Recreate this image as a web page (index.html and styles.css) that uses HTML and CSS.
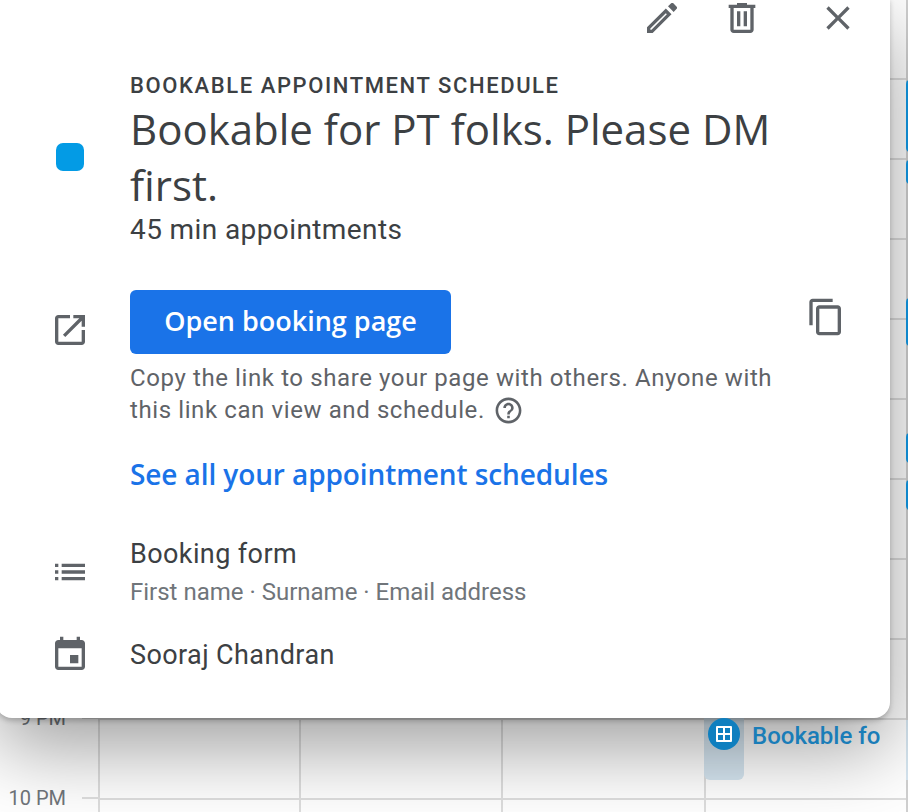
FILE: index.html
```html
<!DOCTYPE html>
<html lang="en">
    <head>
        <title>Bookable appointment schedule</title>
        <meta charset="utf-8" />
        <link rel="stylesheet" href="styles.css">
    </head>
    <body>
        <div class="calendar">
            <div class="hours">
                <div class="hour"><span>1 PM</span><i></i></div>
                <div class="hour"><span>2 PM</span><i></i></div>
                <div class="hour"><span>3 PM</span><i></i></div>
                <div class="hour"><span>4 PM</span><i></i></div>
                <div class="hour"><span>5 PM</span><i></i></div>
                <div class="hour"><span>6 PM</span><i></i></div>
                <div class="hour"><span>7 PM</span><i></i></div>
                <div class="hour"><span>8 PM</span><i></i></div>
                <div class="hour"><span>9 PM</span><i></i></div>
                <div class="hour"><span>10 PM</span><i></i></div>
            </div>
            <div class="day day1"></div>
            <div class="day day2"></div>
            <div class="day day3"></div>
            <div class="day day4">
                <div class="slot"></div>
                <div class="slot_chip">
                    <svg class="slot_icon" viewBox="0 0 32 32"><path fill="#fff" fill-rule="evenodd" d="M9 8h14a1 1 0 0 1 1 1v14a1 1 0 0 1-1 1H9a1 1 0 0 1-1-1V9a1 1 0 0 1 1-1z M10 10v5h5v-5z M17 10v5h5v-5z M10 17v5h5v-5z M17 17v5h5v-5z"/></svg>
                    <span class="slot_text">Bookable for PT folks</span>
                </div>
            </div>
            <div class="day day5">
                <div class="bar bar1"></div>
                <div class="bar bar2"></div>
                <div class="bar bar3"></div>
                <div class="bar bar4"></div>
                <div class="bar bar5"></div>
                <div class="slot_edge"></div>
            </div>
        </div>

        <div class="popup">
            <div class="tools">
                <svg class="icon" viewBox="0 0 24 24"><path fill-rule="evenodd" d="M3 21v-3.4L14.3 6.3l3.4 3.4L6.4 21H3zM5 19h.7l9.2-9.3-.6-.6L5 18.3V19zM15.6 5l1.9-1.8c.4-.3.9-.3 1.3 0l2 2c.3.4.3.9 0 1.3L19 8.4 15.6 5z"/></svg>
                <svg class="icon" viewBox="0 0 24 24"><path d="M15 4V3H9v1H4v2h1v13c0 1.1.9 2 2 2h10c1.1 0 2-.9 2-2V6h1V4h-5zm2 15H7V6h10v13zM9 8h2v9H9zm4 0h2v9h-2z"/></svg>
                <svg class="icon close" viewBox="0 0 24 24"><path d="M19 6.41L17.59 5 12 10.59 6.41 5 5 6.41 10.59 12 5 17.59 6.41 19 12 13.41 17.59 19 19 17.59 13.41 12z"/></svg>
            </div>

            <div class="row head">
                <div class="side"><div class="swatch"></div></div>
                <div class="main">
                    <div class="kicker">BOOKABLE APPOINTMENT SCHEDULE</div>
                    <div class="title">Bookable for PT folks. Please DM first.</div>
                    <div class="sub">45 min appointments</div>
                </div>
            </div>

            <div class="row booking">
                <div class="side side_link">
                    <svg class="icon" viewBox="0 0 24 24"><path d="M19 19H5V5h7V3H5c-1.11 0-2 .9-2 2v14c0 1.1.89 2 2 2h14c1.1 0 2-.9 2-2v-7h-2v7zM14 3v2h3.59l-9.83 9.83 1.41 1.41L19 6.41V10h2V3h-7z"/></svg>
                </div>
                <div class="main">
                    <div class="button_row">
                        <div class="open_btn">Open booking page</div>
                        <svg class="icon copy" viewBox="0 0 24 24"><path d="M16 1H4c-1.1 0-2 .9-2 2v14h2V3h12V1zm3 4H8c-1.1 0-2 .9-2 2v14c0 1.1.9 2 2 2h11c1.1 0 2-.9 2-2V7c0-1.1-.9-2-2-2zm0 16H8V7h11v14z"/></svg>
                    </div>
                    <div class="hint">Copy the link to share your page with others. Anyone with this link can view and schedule.<svg class="help" viewBox="0 0 24 24"><path d="M11 18h2v-2h-2v2zm1-16C6.48 2 2 6.48 2 12s4.48 10 10 10 10-4.48 10-10S17.52 2 12 2zm0 18c-4.41 0-8-3.59-8-8s3.59-8 8-8 8 3.59 8 8-3.59 8-8 8zm0-14c-2.21 0-4 1.79-4 4h2c0-1.1.9-2 2-2s2 .9 2 2c0 2-3 1.75-3 5h2c0-2.25 3-2.5 3-5 0-2.21-1.79-4-4-4z"/></svg></div>
                    <div class="see_all">See all your appointment schedules</div>
                </div>
            </div>

            <div class="row form">
                <div class="side">
                    <svg class="icon" viewBox="0 0 24 24"><path d="M3 13h2v-2H3v2zm0 4h2v-2H3v2zm0-8h2V7H3v2zm4 4h14v-2H7v2zm0 4h14v-2H7v2zM7 7v2h14V7H7z"/></svg>
                </div>
                <div class="main">
                    <div class="label">Booking form</div>
                    <div class="fields">First name · Surname · Email address</div>
                </div>
            </div>

            <div class="row owner">
                <div class="side">
                    <svg class="icon" viewBox="0 0 24 24"><path d="M17 12h-5v5h5v-5zM16 1v2H8V1H6v2H5c-1.11 0-1.99.9-1.99 2L3 19c0 1.1.89 2 2 2h14c1.1 0 2-.9 2-2V5c0-1.1-.9-2-2-2h-1V1h-2zm3 18H5V8h14v11z"/></svg>
                </div>
                <div class="main">
                    <div class="label">Sooraj Chandran</div>
                </div>
            </div>
        </div>
    </body>
</html>
```
FILE: styles.css
```css
html, body {
    margin: 0;
    padding: 0;
    height: 100%;
    overflow: hidden;
    background-color: #fff;
    font-family: Roboto, "Liberation Sans", sans-serif;
}

/* Calendar behind the popup */
.calendar {
    display: flex;
    height: 812px;
    overflow: hidden;
}
.hours {
    flex: 0 0 98px;
    margin-top: -1px;
}
.hour {
    display: flex;
    align-items: flex-end;
    justify-content: flex-end;
    height: 80px;
}
.hour span {
    margin-bottom: -11px;
    margin-right: 16px;
    font-size: 20px;
    line-height: 24px;
    color: #70757a;
}
.hour i {
    display: block;
    width: 16px;
    height: 2px;
    background-color: #dedede;
}
.day {
    position: relative;
    box-sizing: border-box;
    border-left: 2px solid #dedede;
    background-image: repeating-linear-gradient(to bottom, transparent 0, transparent 78px, #dedede 78px, #dedede 80px);
}
.day1 { flex: 0 0 201px; }
.day2 { flex: 0 0 202px; }
.day3 { flex: 0 0 203px; }
.day4 { flex: 0 0 202px; }
.day5 { flex: 1; border-left-color: #d0d0d0; }

.slot {
    position: absolute;
    left: -2px;
    top: 700px;
    width: 40px;
    height: 80px;
    border-radius: 6px;
    background-color: #d6e6f1;
}
.slot_chip {
    position: absolute;
    z-index: 2;
    left: 2px;
    top: 718px;
    display: flex;
    align-items: center;
    gap: 12px;
    width: 172px;
    overflow: hidden;
    white-space: nowrap;
}
.slot_icon {
    flex: none;
    width: 32px;
    height: 32px;
    border-radius: 50%;
    background-color: #0f7fbf;
}
.slot_text {
    margin-top: 4px;
    font-size: 24px;
    font-weight: 500;
    color: #1a7db8;
}
.bar {
    position: absolute;
    left: -2px;
    width: 8px;
    border-radius: 6px;
    background-color: #129be8;
}
.bar1 { top: 80px; height: 72px; }
.bar2 { top: 160px; height: 24px; }
.bar3 { top: 298px; height: 48px; }
.bar4 { top: 433px; height: 30px; }
.bar5 { top: 480px; height: 30px; }
.slot_edge {
    position: absolute;
    left: -2px;
    top: 720px;
    width: 8px;
    height: 60px;
    background-color: #d6e6f1;
}

/* Popup */
.popup {
    position: absolute;
    left: -4px;
    top: -2px;
    width: 894px;
    height: 720px;
    box-sizing: border-box;
    border-radius: 0 0 16px 16px;
    background-color: #fff;
    box-shadow: 0 3px 5px rgba(0, 0, 0, 0.2), 0 30px 80px rgba(0, 0, 0, 0.38);
    color: #3c4043;
}
.icon {
    display: block;
    flex: none;
    width: 40px;
    height: 40px;
    fill: #5f6368;
}
.tools {
    display: flex;
    justify-content: flex-end;
    gap: 40px;
    padding-right: 32px;
}
.tools .close {
    margin-left: 16px;
}
.row {
    display: flex;
    gap: 40px;
    padding-left: 54px;
}
.side {
    flex: 0 0 40px;
    display: flex;
    justify-content: center;
}
.main {
    flex: 1;
    min-width: 0;
    padding-right: 118px;
}

.head {
    margin-top: 32px;
}
.head .side {
    align-items: center;
    padding-bottom: 2px;
}
.swatch {
    width: 28px;
    height: 28px;
    border-radius: 7px;
    background-color: #039be5;
}
.kicker {
    font-size: 22px;
    font-weight: 500;
    line-height: 31px;
    letter-spacing: 1.6px;
    white-space: nowrap;
}
.title {
    font-family: "Open Sans", Roboto, sans-serif;
    font-size: 42px;
    line-height: 56px;
    width: 650px;
}
.sub {
    margin-top: 1px;
    font-size: 28px;
    line-height: 32px;
    letter-spacing: 0.4px;
}

.booking {
    margin-top: 44px;
}
.side_link {
    padding-top: 20px;
}
.button_row {
    display: flex;
    justify-content: space-between;
    width: 716px;
}
.open_btn {
    width: 321px;
    height: 64px;
    border-radius: 6px;
    background-color: #1a73e8;
    color: #fff;
    font-family: "Open Sans", Roboto, sans-serif;
    font-size: 27px;
    font-weight: 600;
    line-height: 61px;
    text-align: center;
}
.copy {
    margin-top: 7px;
}
.hint {
    margin-top: 8px;
    font-size: 24px;
    line-height: 32px;
    letter-spacing: 0.6px;
    color: #5f6368;
    width: 650px;
}
.help {
    width: 31px;
    height: 31px;
    margin-left: 8px;
    vertical-align: -8px;
    fill: #5f6368;
}
.see_all {
    margin-top: 30px;
    font-family: "Open Sans", Roboto, sans-serif;
    font-size: 28px;
    font-weight: 600;
    line-height: 36px;
    letter-spacing: -0.1px;
    color: #1a73e8;
    white-space: nowrap;
}

.form {
    margin-top: 44px;
}
.form .side {
    padding-top: 16px;
}
.label {
    font-size: 27px;
    line-height: 36px;
    letter-spacing: 0.4px;
}
.fields {
    margin-top: 4px;
    font-size: 24px;
    line-height: 32px;
    color: #70757a;
}
.owner {
    margin-top: 29px;
}
.owner .icon {
    margin-top: -2px;
}
```
